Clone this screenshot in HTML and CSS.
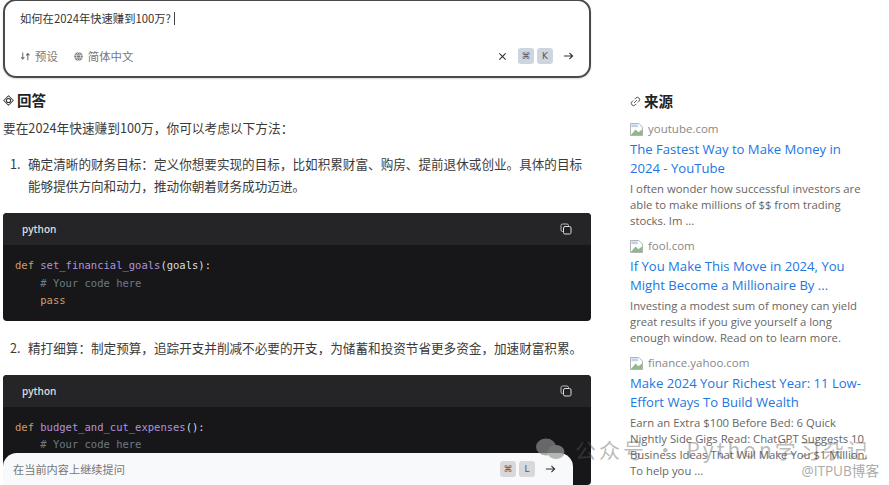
FILE: index.html
```html
<!DOCTYPE html>
<html lang="zh">
<head>
<meta charset="utf-8">
<title>回答</title>
<link rel="stylesheet" href="styles.css">
</head>
<body>
<div class="page">
  <main class="main">
    <section class="ask">
      <div class="ask-q">如何在2024年快速赚到100万? <span class="caret"></span></div>
      <div class="ask-bar">
        <div class="opt">
          <svg class="ic" viewBox="0 0 12 12"><path d="M3 1.500v7M1.200 6.800 3 8.800l1.800-2M8.500 10V3M6.800 4.800 8.500 2.800l1.800 2" fill="none" stroke="#666" stroke-width="1.100"/></svg>
          <span>预设</span>
        </div>
        <div class="opt">
          <svg class="ic" viewBox="0 0 12 12"><circle cx="6" cy="6" r="4.600" fill="#777"/><path d="M1.500 4.600h9M1.500 7.400h9M6 1.400c-3 3-3 6.200 0 9.200M6 1.400c3 3 3 6.200 0 9.200" fill="none" stroke="#fff" stroke-width=".7"/></svg>
          <span>简体中文</span>
        </div>
        <div class="spacer"></div>
        <svg class="x" viewBox="0 0 10 10"><path d="M1.500 1.500l7 7M8.500 1.500l-7 7" stroke="#333" stroke-width="1.200"/></svg>
        <span class="key k1">⌘</span>
        <span class="key k2">K</span>
        <svg class="arrow" viewBox="0 0 12 10"><path d="M1 5h9.500M7 1.500 10.500 5 7 8.500" fill="none" stroke="#333" stroke-width="1.200"/></svg>
      </div>
    </section>

    <h2 class="head">
      <svg class="head-ic" viewBox="0 0 12 12"><path d="M6 .8 11.200 6 6 11.200.8 6Z" fill="none" stroke="#333" stroke-width="1.100" stroke-linejoin="round"/><circle cx="6" cy="6" r="2.300" fill="none" stroke="#333" stroke-width="1.100"/></svg>
      回答
    </h2>
    <p class="lead">要在2024年快速赚到100万，你可以考虑以下方法：</p>

    <div class="item">
      <span class="num">1.</span>
      <p>确定清晰的财务目标：定义你想要实现的目标，比如积累财富、购房、提前退休或创业。具体的目标能够提供方向和动力，推动你朝着财务成功迈进。</p>
    </div>

    <div class="code">
      <div class="code-head">
        <span>python</span>
        <svg class="copy" viewBox="0 0 12 12"><rect x="1" y="1" width="7.500" height="7.500" rx="1.500" fill="none" stroke="#bbb"/><rect x="3.500" y="3.500" width="7.500" height="7.500" rx="1.500" fill="#222" stroke="#ddd"/></svg>
      </div>
      <pre class="code-body"><span class="kw">def</span> <span class="fn">set_financial_goals</span>(goals):
    <span class="cm"># Your code here</span>
    <span class="kw">pass</span></pre>
    </div>

    <div class="item item2">
      <span class="num">2.</span>
      <p>精打细算：制定预算，追踪开支并削减不必要的开支，为储蓄和投资节省更多资金，加速财富积累。</p>
    </div>

    <div class="code code2">
      <div class="code-head">
        <span>python</span>
        <svg class="copy" viewBox="0 0 12 12"><rect x="1" y="1" width="7.500" height="7.500" rx="1.500" fill="none" stroke="#bbb"/><rect x="3.500" y="3.500" width="7.500" height="7.500" rx="1.500" fill="#222" stroke="#ddd"/></svg>
      </div>
      <pre class="code-body"><span class="kw">def</span> <span class="fn">budget_and_cut_expenses</span>():
    <span class="cm"># Your code here</span></pre>
    </div>

    <div class="follow">
      <span class="follow-text">在当前内容上继续提问</span>
      <span class="key k3">⌘</span>
      <span class="key k4">L</span>
      <svg class="arrow" viewBox="0 0 12 10"><path d="M1 5h9.500M7 1.500 10.500 5 7 8.500" fill="none" stroke="#333" stroke-width="1.200"/></svg>
    </div>
  </main>

  <aside class="side">
    <h2 class="side-head">
      <svg class="link-ic" viewBox="0 0 12 12"><path d="M4.500 7.500 7.500 4.500M5 3.500 6.300 2.200a2.300 2.300 0 0 1 3.500 3.500L8.500 7M7 8.500 5.700 9.800a2.300 2.300 0 0 1-3.500-3.500L3.500 5" fill="none" stroke="#444" stroke-width="1"/></svg>
      来源
    </h2>
    <article class="src">
      <div class="domain"><svg class="broken" viewBox="0 0 14 14"><path d="M.5.5h9l4 4v9H.500Z" fill="#fff" stroke="#aaa"/><path d="M1 13 6 7l3 3 4-3v6Z" fill="#8fb98a"/><path d="M1.500 1.500h7v3H1.500Z" fill="#bcd3ee"/></svg><span>youtube.com</span></div>
      <a class="title">The Fastest Way to Make Money in 2024 - YouTube</a>
      <p class="desc">I often wonder how successful investors are able to make millions of $$ from trading stocks. Im ...</p>
    </article>
    <article class="src">
      <div class="domain"><svg class="broken" viewBox="0 0 14 14"><path d="M.5.5h9l4 4v9H.500Z" fill="#fff" stroke="#aaa"/><path d="M1 13 6 7l3 3 4-3v6Z" fill="#8fb98a"/><path d="M1.500 1.500h7v3H1.500Z" fill="#bcd3ee"/></svg><span>fool.com</span></div>
      <a class="title">If You Make This Move in 2024, You Might Become a Millionaire By ...</a>
      <p class="desc">Investing a modest sum of money can yield great results if you give yourself a long enough window. Read on to learn more.</p>
    </article>
    <article class="src">
      <div class="domain"><svg class="broken" viewBox="0 0 14 14"><path d="M.5.5h9l4 4v9H.500Z" fill="#fff" stroke="#aaa"/><path d="M1 13 6 7l3 3 4-3v6Z" fill="#8fb98a"/><path d="M1.500 1.500h7v3H1.500Z" fill="#bcd3ee"/></svg><span>finance.yahoo.com</span></div>
      <a class="title">Make 2024 Your Richest Year: 11 Low-Effort Ways To Build Wealth</a>
      <p class="desc">Earn an Extra $100 Before Bed: 6 Quick Nightly Side Gigs Read: ChatGPT Suggests 10 Business Ideas That Will Make You $1 Million. To help you ...</p>
    </article>
  </aside>
</div>

<div class="wm">
  <svg class="wm-ic" viewBox="0 0 30 22"><ellipse cx="11" cy="9" rx="10" ry="8.500" fill="#8a8a8a"/><ellipse cx="21" cy="14" rx="8.500" ry="7" fill="#9a9a9a"/></svg>
  <span>公众号 · Python学习杂记</span>
</div>
<div class="wm2">@ITPUB博客</div>
</body>
</html>
```

FILE: styles.css
```css
* { box-sizing: border-box; }
html, body { margin: 0; padding: 0; height: 485px; overflow: hidden; background: #fff; }
body { font-family: "Open Sans", "Noto Sans CJK SC", sans-serif; color: #3a3a3a; position: relative; }
.page { display: flex; gap: 39px; padding-left: 3px; height: 485px; overflow: hidden; }
.main { width: 588px; flex: none; position: relative; height: 485px; }
.side { width: 242px; flex: none; padding-top: 91px; }

.ask { margin-top: -1px; height: 79px; border: 2px solid #4a4a4a; border-radius: 13px; padding: 8px 15px 0 15px; display: flex; flex-direction: column; box-shadow: 0 1px 2px rgba(0,0,0,.15); }
.ask-q { font-size: 11.300px; line-height: 18px; color: #333; font-family: "Noto Sans CJK SC", sans-serif; }
.caret { display: inline-block; width: 1px; height: 13px; background: #444; vertical-align: -2px; margin-left: 1px; }
.ask-bar { display: flex; align-items: center; margin-top: 19px; height: 20px; font-size: 11.400px; color: #777; font-family: "Noto Sans CJK SC", sans-serif; }
.opt { display: flex; align-items: center; gap: 4px; margin-right: 15px; }
.ic { width: 11px; height: 11px; }
.spacer { flex: 1; }
.x { width: 9px; height: 9px; margin-right: 11px; }
.key { display: inline-flex; align-items: center; justify-content: center; width: 16px; height: 16px; border-radius: 3px; background: #cdd6e0; color: #556; font-size: 9px; font-family: "DejaVu Sans", sans-serif; margin-right: 3px; }
.arrow { width: 11px; height: 10px; margin-left: 7px; margin-right: 0; }

.head { margin: 12px 0 0; font-size: 14.500px; line-height: 20px; font-weight: 700; color: #222; display: flex; align-items: center; gap: 3px; font-family: "Noto Sans CJK SC", sans-serif; }
.head-ic { width: 11px; height: 11px; }
.lead { margin: 8px 0 0; font-size: 12.700px; line-height: 20px; color: #3a3a3a; font-family: "Noto Sans CJK SC", sans-serif; }

.item { display: flex; margin-top: 15px; padding-left: 7px; font-size: 12.600px; line-height: 21.500px; font-family: "Noto Sans CJK SC", sans-serif; color: #3a3a3a; }
.num { width: 18px; flex: none; }
.item p { margin: 0; }
.item2 { margin-top: 16px; }

.code { margin-top: 17px; background: #17171a; border-radius: 4px; height: 108px; color: #ddd; overflow: hidden; }
.code2 { height: 110px; margin-top: 16px; }
.code-head { height: 32px; background: #252527; display: flex; align-items: center; justify-content: space-between; padding: 0 19px; font-size: 10px; font-weight: 600; color: #ddd; font-family: "Open Sans", sans-serif; }
.copy { width: 12px; height: 12px; }
.code-body { margin: 0; padding: 12px 12px 0; font-family: "DejaVu Sans Mono", monospace; font-size: 10.500px; line-height: 17.500px; color: #ddd; }
.kw { color: #cf9c6f; }
.fn { color: #b392d8; }
.cm { color: #6d7a84; }

.follow { position: absolute; left: 0; right: 18px; bottom: 0; height: 32px; background: #f8f9fb; border-radius: 14px 14px 0 0; display: flex; align-items: center; padding: 0 17px 0 10px; font-size: 11.200px; color: #777; font-family: "Noto Sans CJK SC", sans-serif; }
.follow-text { flex: 1; }
.k3, .k4 { background: #d8d8da; }

.side-head { margin: 0; font-size: 14.500px; line-height: 20px; font-weight: 700; color: #222; display: flex; align-items: center; gap: 3px; font-family: "Noto Sans CJK SC", sans-serif; }
.link-ic { width: 11px; height: 11px; }
.src { margin-top: 8px; }
.side-head + .src { margin-top: 9px; }
.domain { display: flex; align-items: center; gap: 5px; font-size: 11.500px; line-height: 18px; color: #888; }
.broken { width: 13px; height: 13px; }
.title { display: block; font-size: 13.100px; line-height: 19px; color: #2176e3; margin-top: 2px; }
.desc { margin: 3px 0 0; font-size: 11.300px; line-height: 16px; color: #666; }

.wm { position: absolute; left: 535px; top: 434px; display: flex; align-items: center; gap: 10px; font-size: 21px; letter-spacing: 3px; color: rgba(90,90,90,.42); font-family: "Noto Sans CJK SC", sans-serif; white-space: nowrap; }
.wm-ic { width: 30px; height: 22px; opacity: .7; }
.wm2 { position: absolute; right: 10px; top: 460px; font-size: 13.600px; color: #aaa; font-family: "Open Sans", "Noto Sans CJK SC", sans-serif; }
```
